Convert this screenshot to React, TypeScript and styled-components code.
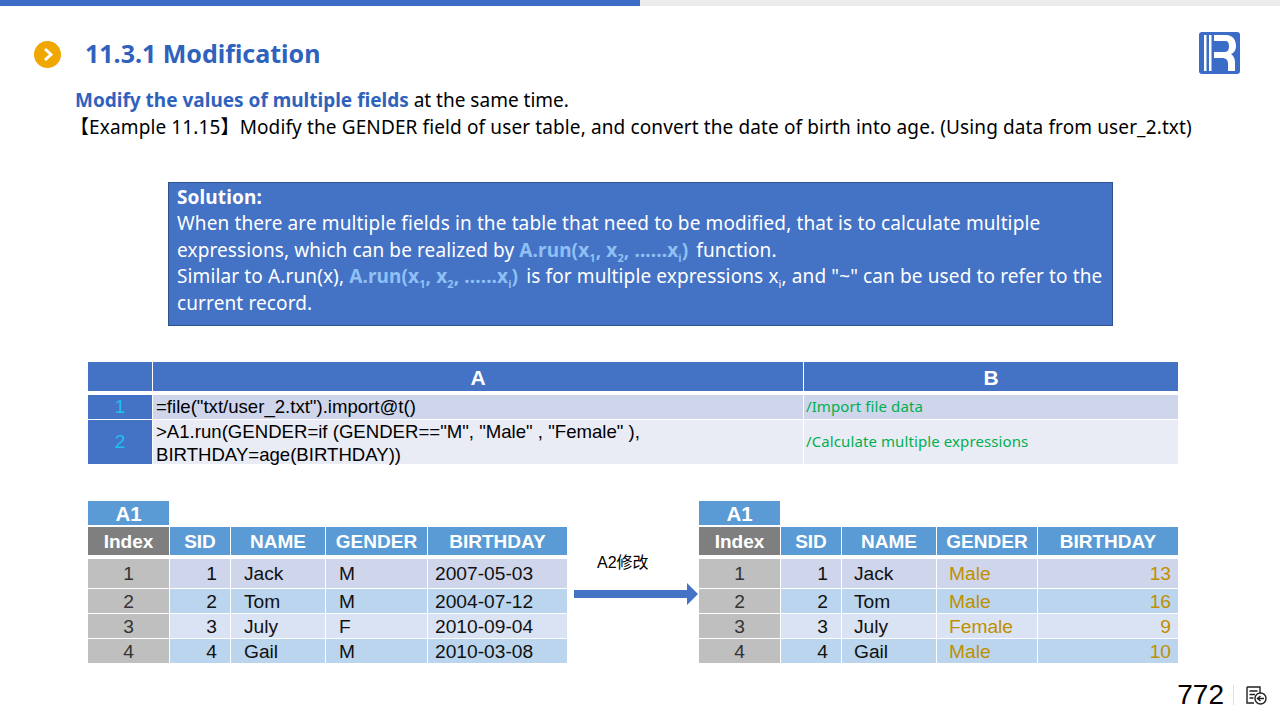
import React from "react";
import styled, { createGlobalStyle } from "styled-components";

const GlobalStyle = createGlobalStyle`
  html, body {
    margin: 0;
    padding: 0;
    background: #fff;
  }
`;

const Slide = styled.div`
  width: 1280px;
  height: 720px;
  overflow: hidden;
  background: #fff;
  font-family: "Noto Sans", "Noto Sans CJK SC", sans-serif;
  color: #000;
  display: flex;
  flex-direction: column;
`;

const ProgressTrack = styled.div`
  height: 6px;
  background: #ebebeb;
  flex: none;
`;

const ProgressFill = styled.div`
  width: 50%;
  height: 100%;
  background: #3b6cc7;
`;

const Header = styled.header`
  height: 68px;
  padding: 0 40px 0 34px;
  display: flex;
  align-items: center;
  flex: none;
`;

const Bullet = styled.span`
  width: 27px;
  height: 27px;
  border-radius: 50%;
  background: #f0a800;
  display: flex;
  align-items: center;
  justify-content: center;
  margin-top: 29px;
`;

const Title = styled.h1`
  margin: 26px 0 0 24px;
  font-size: 25px;
  font-weight: 700;
  line-height: 30px;
  color: #2f62bd;
  flex: 1;
`;

const Logo = styled.svg`
  width: 41px;
  height: 42px;
  margin-top: 26px;
`;

const Intro = styled.div`
  padding-left: 75px;
  margin-top: 13px;
  font-size: 19px;
  line-height: 27px;
  white-space: nowrap;
  flex: none;
`;

const IntroLead = styled.strong`
  color: #2f62bd;
  font-weight: 700;
`;

const ExampleLine = styled.div`
  margin-left: -5px;
  letter-spacing: 0.12px;
`;

const SolutionBox = styled.div`
  width: 945px;
  height: 144px;
  box-sizing: border-box;
  margin: 41px 0 0 168px;
  padding: 2px 8px 0;
  background: #4472c4;
  border: 1px solid #2f528f;
  color: #fff;
  font-size: 19px;
  line-height: 26.5px;
  letter-spacing: 0.12px;
  white-space: nowrap;
  flex: none;
`;

const SolutionHead = styled.div`
  font-weight: 700;
  line-height: 25px;
`;

const Formula = styled.strong`
  color: #8fc0f5;
  font-weight: 700;
  margin-right: 3px;
`;

const Sub = styled.sub`
  font-size: 11px;
  line-height: 0;
`;

const CodeGrid = styled.div`
  margin: 36px 0 0 88px;
  width: 1090px;
  display: grid;
  grid-template-columns: 64px 650px 374px;
  grid-template-rows: 29px 28px 45px;
  column-gap: 1px;
  flex: none;
  font-family: "Liberation Sans", Arial, sans-serif;
`;

const CodeHead = styled.div`
  background: #4472c4;
  color: #fff;
  font-weight: 700;
  font-size: 21px;
  padding-top: 3px;
  box-sizing: border-box;
  display: flex;
  align-items: center;
  justify-content: center;
`;

const CodeIndex = styled.div<{ $first?: boolean }>`
  background: #4472c4;
  color: #1cc0f0;
  font-size: 19px;
  display: flex;
  align-items: center;
  justify-content: center;
  margin-top: ${(p) => (p.$first ? "4px" : "1px")};
`;

const CodeCell = styled.div<{ $tone: "dark" | "light"; $first?: boolean }>`
  background: ${(p) => (p.$tone === "dark" ? "#cfd5ea" : "#e9ebf5")};
  font-size: 18.6px;
  line-height: 23px;
  padding: ${(p) => (p.$first ? "0 0 2px 3px" : "2px 0 0 3px")};
  display: flex;
  flex-direction: column;
  justify-content: center;
  white-space: nowrap;
  margin-top: ${(p) => (p.$first ? "4px" : "1px")};
`;

const Remark = styled(CodeCell)`
  font-family: "Noto Sans", sans-serif;
  font-size: 15px;
  letter-spacing: 0.1px;
  padding: 0 0 2px 2px;
  color: #00b050;
`;

const TablesRow = styled.div`
  margin: 37px 0 0 88px;
  width: 1090px;
  display: flex;
  align-items: flex-start;
  flex: none;
`;

const DataGrid = styled.div<{ $columns: string }>`
  display: grid;
  grid-template-columns: ${(p) => p.$columns};
  grid-template-rows: 24px 32px 29px 24px 24px 24px;
  column-gap: 1px;
  row-gap: 1px;
  font-family: "Liberation Sans", Arial, sans-serif;
  font-size: 19.2px;
`;

const RangeLabel = styled.div`
  grid-column: 1;
  background: #5b9bd5;
  color: #fff;
  font-weight: 700;
  font-size: 20.5px;
  padding-top: 2px;
  box-sizing: border-box;
  display: flex;
  align-items: center;
  justify-content: center;
`;

const RangeSpacer = styled.div`
  grid-column: 2 / -1;
`;

const HeadCell = styled.div<{ $index?: boolean }>`
  background: ${(p) => (p.$index ? "#7f7f7f" : "#5b9bd5")};
  color: #fff;
  font-weight: 700;
  font-size: 19px;
  padding-top: 2px;
  box-sizing: border-box;
  display: flex;
  align-items: center;
  justify-content: center;
  margin: 1px 0 3px;
`;

const BodyCell = styled.div<{ $tone: string; $color?: string }>`
  background: ${(p) => p.$tone};
  color: ${(p) => p.$color ?? "#111"};
  display: flex;
  align-items: center;
  padding-top: 1px;
  box-sizing: border-box;
`;

const IndexCell = styled(BodyCell)`
  justify-content: center;
`;

const SidCell = styled(BodyCell)`
  justify-content: flex-end;
  padding-right: 13px;
`;

const TextCell = styled(BodyCell)<{ $inset: number }>`
  padding-left: ${(p) => p.$inset}px;
`;

const DateCell = styled(BodyCell)`
  padding-left: 7px;
`;

const AgeCell = styled(BodyCell)`
  justify-content: flex-end;
  padding-right: 7px;
`;

const ArrowColumn = styled.div`
  width: 132px;
  box-sizing: border-box;
  padding: 52px 0 0 5px;
  flex: none;
  display: flex;
  flex-direction: column;
  align-items: center;
`;

const ArrowLabel = styled.div`
  align-self: flex-start;
  margin: 0 0 10px 25px;
  font-size: 16px;
  line-height: 20px;
  font-family: "Liberation Sans", "Noto Sans CJK SC", sans-serif;
`;

const Footer = styled.footer`
  margin-top: auto;
  height: 50px;
  padding: 0 13px 0 0;
  display: flex;
  align-items: center;
  justify-content: flex-end;
  flex: none;
  font-family: "Liberation Sans", Arial, sans-serif;
`;

const PageNumber = styled.span`
  font-size: 28px;
  color: #000;
`;

const FooterDivider = styled.span`
  width: 1px;
  height: 20px;
  background: #d5e0f0;
  margin: 0 12px 0 9px;
`;

const columnsLeft = "81px 60px 94px 101px 139px";
const columnsRight = "81px 60px 94px 100px 140px";

type Row = { sid: number; name: string; gender: string; birthday: string; age: number; genderText: string };

const rows: Row[] = [
  { sid: 1, name: "Jack", gender: "M", birthday: "2007-05-03", age: 13, genderText: "Male" },
  { sid: 2, name: "Tom", gender: "M", birthday: "2004-07-12", age: 16, genderText: "Male" },
  { sid: 3, name: "July", gender: "F", birthday: "2010-09-04", age: 9, genderText: "Female" },
  { sid: 4, name: "Gail", gender: "M", birthday: "2010-03-08", age: 10, genderText: "Male" },
];

const toneOf = (i: number) => ["#cfd5ea", "#bad5ed", "#dae3f3", "#bad5ed"][i];

const headers = ["Index", "SID", "NAME", "GENDER", "BIRTHDAY"];

const DataTable = ({ columns, modified }: { columns: string; modified?: boolean }) => (
  <DataGrid $columns={columns}>
    <RangeLabel>A1</RangeLabel>
    <RangeSpacer />
    {headers.map((h, i) => (
      <HeadCell key={h} $index={i === 0}>
        {h}
      </HeadCell>
    ))}
    {rows.map((r, i) => (
      <React.Fragment key={r.sid}>
        <IndexCell $tone="#bfbfbf" $color="#333">
          {i + 1}
        </IndexCell>
        <SidCell $tone={toneOf(i)}>{r.sid}</SidCell>
        <TextCell $tone={toneOf(i)} $inset={modified ? 12 : 13}>
          {r.name}
        </TextCell>
        {modified ? (
          <>
            <TextCell $tone={toneOf(i)} $inset={12} $color="#bf8f00">
              {r.genderText}
            </TextCell>
            <AgeCell $tone={toneOf(i)} $color="#bf8f00">
              {r.age}
            </AgeCell>
          </>
        ) : (
          <>
            <TextCell $tone={toneOf(i)} $inset={13}>
              {r.gender}
            </TextCell>
            <DateCell $tone={toneOf(i)}>{r.birthday}</DateCell>
          </>
        )}
      </React.Fragment>
    ))}
  </DataGrid>
);

const RunFormula = () => (
  <Formula>
    A.run(x<Sub>1</Sub>, x<Sub>2</Sub>, ......x<Sub>i</Sub>)
  </Formula>
);

const App = () => (
  <Slide>
    <GlobalStyle />
    <ProgressTrack>
      <ProgressFill />
    </ProgressTrack>

    <Header>
      <Bullet>
        <svg width="12" height="15" viewBox="0 0 12 15">
          <path d="M3 2 L9 7.5 L3 13" fill="none" stroke="#fff" strokeWidth="3" />
        </svg>
      </Bullet>
      <Title>11.3.1 Modification</Title>
      <Logo viewBox="0 0 41 42">
        <rect width="41" height="42" rx="3" fill="#3b6cc7" />
        <rect x="5" y="3" width="2.5" height="36" fill="#fff" />
        <rect x="10" y="3" width="2.5" height="36" fill="#fff" />
        <path
          d="M15 3 H27 C34 3 37 8 37 14 C37 18 35 21 32 22 C35 24 36 27 36 31 V39 H29 V32 C29 28 27 26 23 26 H15 V20 H26 C29 20 30 17 30 14 C30 11 29 9 26 9 H15 Z"
          fill="#fff"
        />
      </Logo>
    </Header>

    <Intro>
      <IntroLead>Modify the values of multiple fields</IntroLead> at the same time.
      <ExampleLine>
        【Example 11.15】Modify the GENDER field of user table, and convert the date of birth into age. (Using data from user_2.txt)
      </ExampleLine>
    </Intro>

    <SolutionBox>
      <SolutionHead>Solution:</SolutionHead>
      When there are multiple fields in the table that need to be modified, that is to calculate multiple
      <br />
      expressions, which can be realized by <RunFormula /> function.
      <br />
      Similar to A.run(x), <RunFormula /> is for multiple expressions x<Sub>i</Sub>, and "~" can be used to refer to the
      <br />
      current record.
    </SolutionBox>

    <CodeGrid>
      <CodeHead />
      <CodeHead>A</CodeHead>
      <CodeHead>B</CodeHead>
      <CodeIndex $first>1</CodeIndex>
      <CodeCell $tone="dark" $first>
        =file("txt/user_2.txt").import@t()
      </CodeCell>
      <Remark $tone="dark" $first>
        /Import file data
      </Remark>
      <CodeIndex>2</CodeIndex>
      <CodeCell $tone="light">
        <span>&gt;A1.run(GENDER=if (GENDER=="M", "Male" , "Female" ),</span>
        <span>BIRTHDAY=age(BIRTHDAY))</span>
      </CodeCell>
      <Remark $tone="light">/Calculate multiple expressions</Remark>
    </CodeGrid>

    <TablesRow>
      <DataTable columns={columnsLeft} />
      <ArrowColumn>
        <ArrowLabel>A2修改</ArrowLabel>
        <svg width="124" height="22" viewBox="0 0 124 22">
          <path d="M0 7 H113 V0 L124 11 L113 22 V15 H0 Z" fill="#4472c4" />
        </svg>
      </ArrowColumn>
      <DataTable columns={columnsRight} modified />
    </TablesRow>

    <Footer>
      <PageNumber>772</PageNumber>
      <FooterDivider />
      <svg width="21" height="19" viewBox="0 0 21 19">
        <path d="M1 1 H14 V7 M1 1 V17 H8" fill="none" stroke="#222" strokeWidth="1.4" />
        <path d="M3.5 5 H11.5 M3.5 8.5 H9 M3.5 12 H7.5" stroke="#222" strokeWidth="1.4" />
        <circle cx="14.5" cy="12.5" r="5.5" fill="#fff" stroke="#222" strokeWidth="1.4" />
        <path d="M18 12.5 H12 M14.5 10 L11.5 12.5 L14.5 15" fill="none" stroke="#222" strokeWidth="1.4" />
      </svg>
    </Footer>
  </Slide>
);

export default App;
